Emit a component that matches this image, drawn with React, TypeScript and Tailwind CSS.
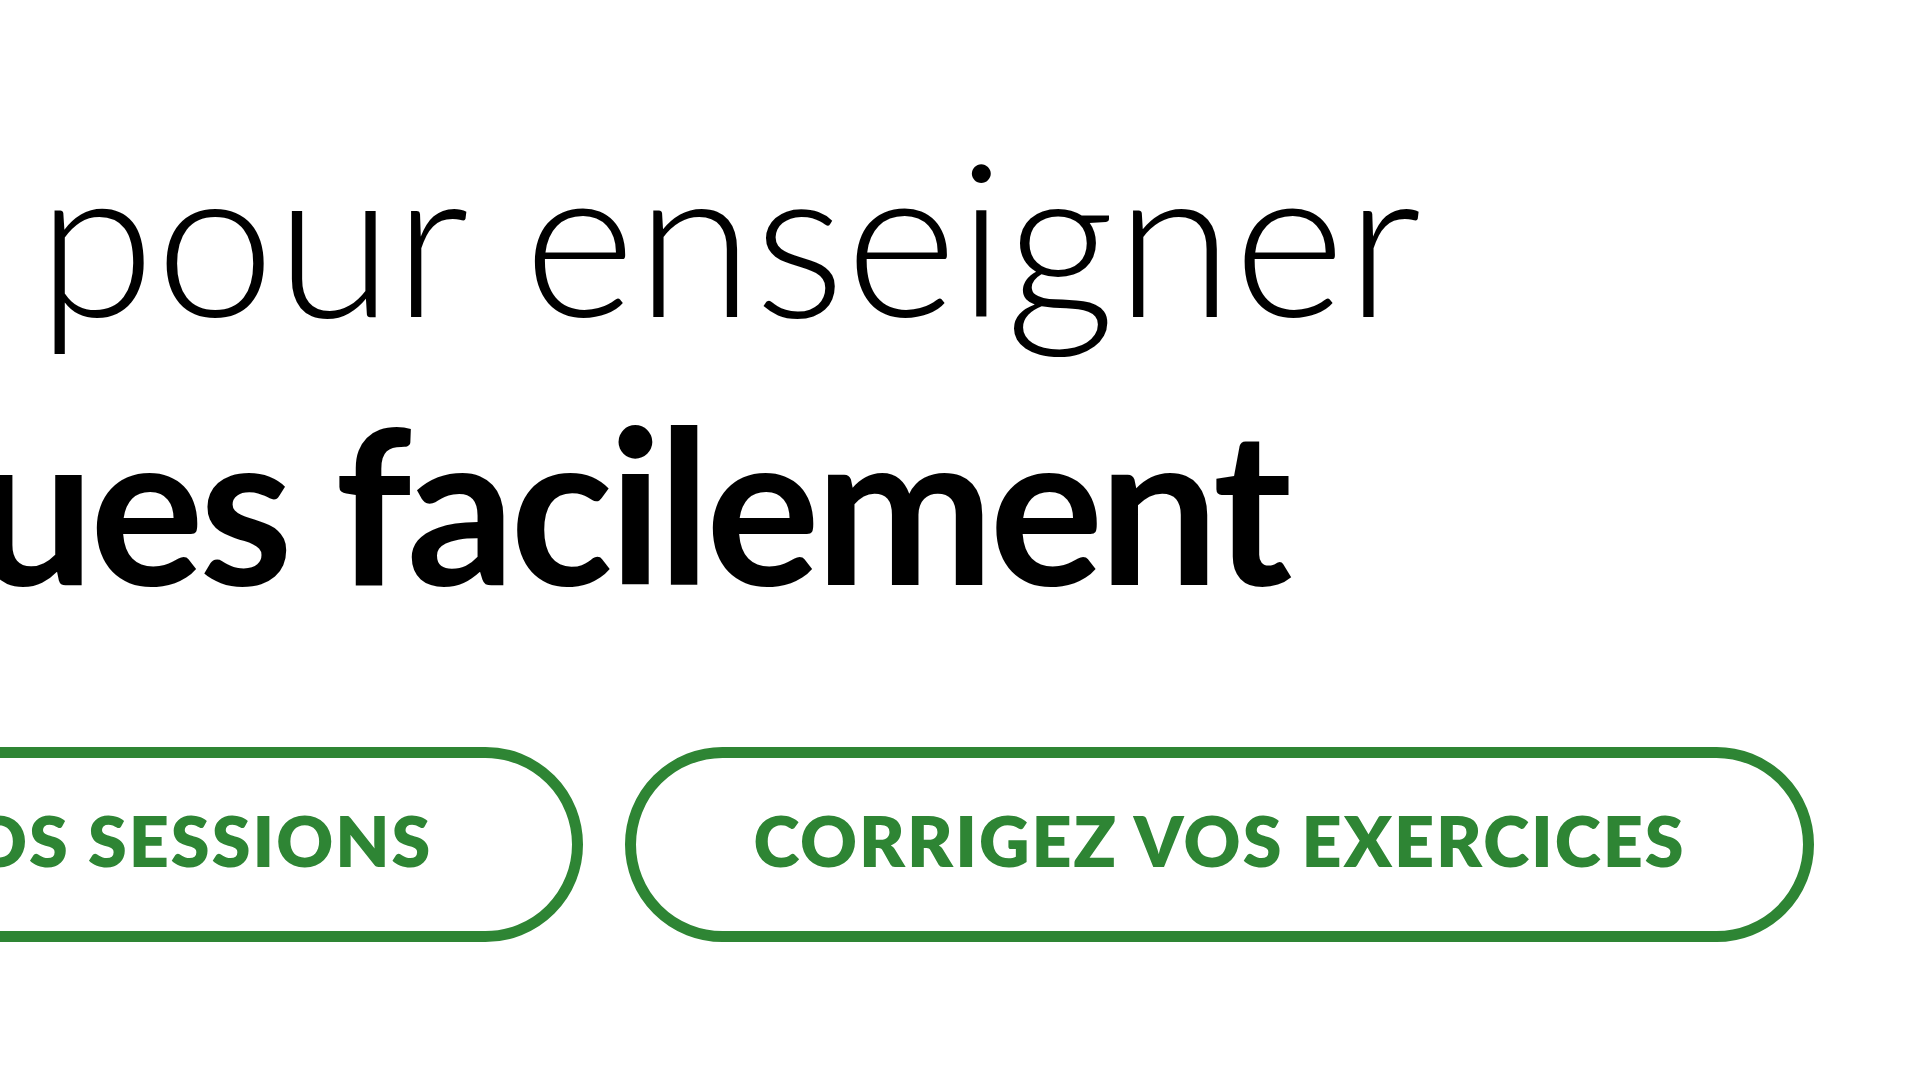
import React, { FC } from 'react';

const lato = { fontFamily: '"Lato", "Liberation Sans", sans-serif' };

const PillButton: FC<{ label: string; className?: string }> = ({ label, className = '' }) => (
  <button
    className={`flex h-[195px] shrink-0 items-center whitespace-nowrap rounded-full border-[11px] border-[#2e8534] bg-white pb-[10px] text-[70px] font-extrabold uppercase leading-none tracking-[2px] text-[#2e8534] ${className}`}
  >
    {label}
  </button>
);

const App: FC = () => {
  return (
    <div className="relative h-[1084px] w-[1930px] overflow-hidden bg-white" style={lato}>
      <div className="pt-[101px]">
        <h1 className="text-[214px] leading-[268px] text-black">
          <span className="block whitespace-nowrap pl-[37px] font-light tracking-[0.5px]">pour enseigner</span>
          <span className="-ml-[26px] block whitespace-nowrap font-bold tracking-[-5px]">ues facilement</span>
        </h1>
      </div>
      <div className="mt-[110px] flex gap-[42px]">
        <PillButton label="os sessions" className="-ml-[158px] pl-[117px] pr-[140px]" />
        <PillButton label="corrigez vos exercices" className="px-[117px]" />
      </div>
    </div>
  );
};

export default App;
